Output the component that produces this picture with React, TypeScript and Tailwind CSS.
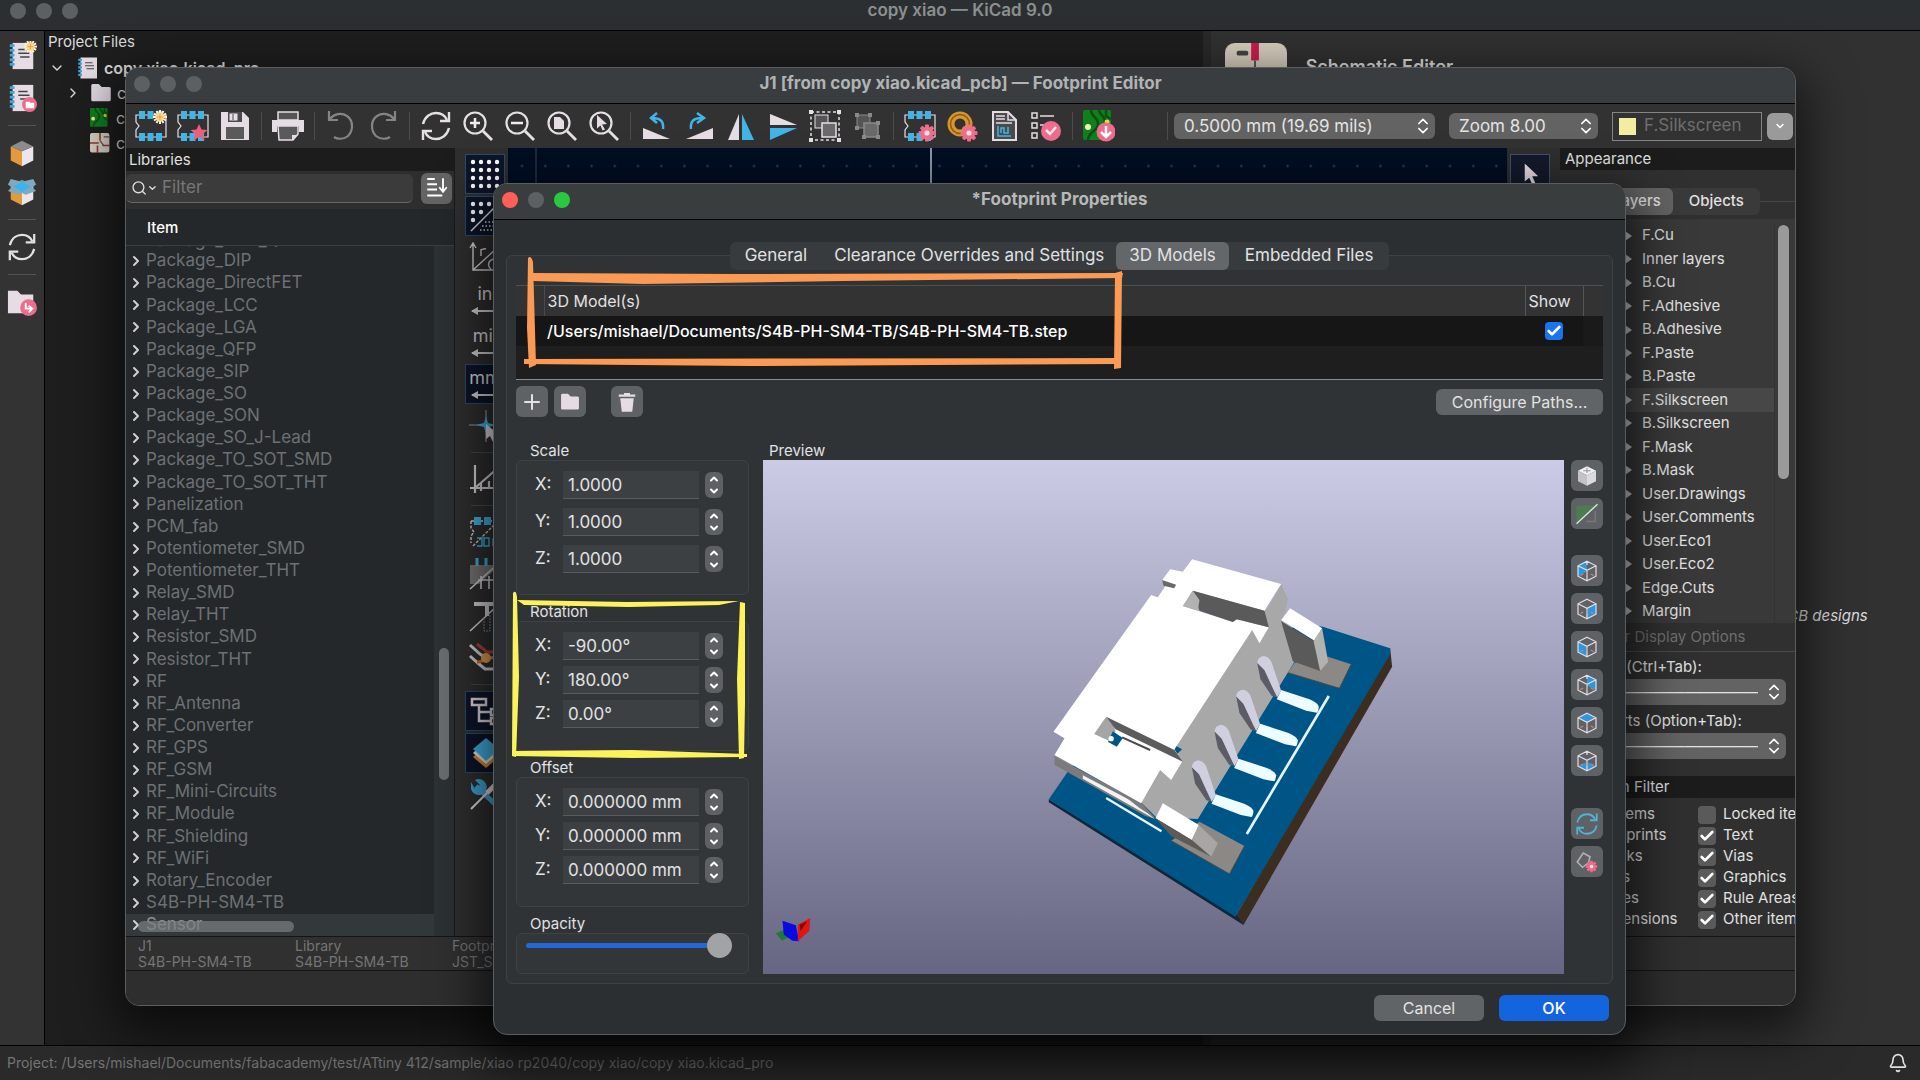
import type { ReactNode } from "react";
import {
  Bell,
  Check,
  ChevronDown,
  ChevronRight,
  ChevronsUpDown,
  ChevronUp,
  Plus,
  Search,
} from "lucide-react";

const libraries = [
  "Package_DIP",
  "Package_DirectFET",
  "Package_LCC",
  "Package_LGA",
  "Package_QFP",
  "Package_SIP",
  "Package_SO",
  "Package_SON",
  "Package_SO_J-Lead",
  "Package_TO_SOT_SMD",
  "Package_TO_SOT_THT",
  "Panelization",
  "PCM_fab",
  "Potentiometer_SMD",
  "Potentiometer_THT",
  "Relay_SMD",
  "Relay_THT",
  "Resistor_SMD",
  "Resistor_THT",
  "RF",
  "RF_Antenna",
  "RF_Converter",
  "RF_GPS",
  "RF_GSM",
  "RF_Mini-Circuits",
  "RF_Module",
  "RF_Shielding",
  "RF_WiFi",
  "Rotary_Encoder",
  "S4B-PH-SM4-TB",
  "Sensor",
];

const layers = [
  "F.Cu",
  "Inner layers",
  "B.Cu",
  "F.Adhesive",
  "B.Adhesive",
  "F.Paste",
  "B.Paste",
  "F.Silkscreen",
  "B.Silkscreen",
  "F.Mask",
  "B.Mask",
  "User.Drawings",
  "User.Comments",
  "User.Eco1",
  "User.Eco2",
  "Edge.Cuts",
  "Margin",
];

const filterLeft = ["All items", "Footprints", "Tracks", "Pads", "Zones", "Dimensions"];
const filterRight = ["Locked items", "Text", "Vias", "Graphics", "Rule Areas", "Other items"];

const groups = [
  { title: "Scale", rows: ["1.0000", "1.0000", "1.0000"], roomy: true },
  { title: "Rotation", rows: ["-90.00°", "180.00°", "0.00°"], roomy: false },
  { title: "Offset", rows: ["0.000000 mm", "0.000000 mm", "0.000000 mm"], roomy: false },
];

const AXES = ["X", "Y", "Z"];

/* ---------- icons ---------- */

function Svg({ children, className = "size-8" }: { children: ReactNode; className?: string }) {
  return (
    <svg viewBox="0 0 32 32" fill="none" className={className} aria-hidden="true">
      {children}
    </svg>
  );
}

function Gear({ x, y, s = 1 }: { x: number; y: number; s?: number }) {
  return (
    <g transform={`translate(${x} ${y}) scale(${s})`}>
      {[0, 45, 90, 135].map((a) => (
        <rect key={a} x="-2" y="-8.5" width="4" height="17" rx="1" fill="#ef6d8c" transform={`rotate(${a})`} />
      ))}
      <circle r="6.3" fill="#ef6d8c" />
      <circle r="2.6" fill="#f6dfe6" />
    </g>
  );
}

function Sun({ x, y }: { x: number; y: number }) {
  return (
    <g transform={`translate(${x} ${y})`}>
      {[0, 30, 60, 90, 120, 150].map((a) => (
        <rect key={a} x="-1" y="-7" width="2" height="14" fill="#fff3cf" transform={`rotate(${a})`} />
      ))}
      <circle r="4.5" fill="#f6d68c" />
      <path d="M-3 0h6M0-3v6" stroke="#e9a23a" />
    </g>
  );
}

function Footprint({ children }: { children?: ReactNode }) {
  return (
    <Svg>
      <path d="M1 5h30v22H1v-7l3-4-3-4z" stroke="#e6e0e6" strokeWidth="1.2" />
      {[5, 13.5, 22].map((x) => (
        <g key={x} fill="#42b5e8">
          <rect x={x - 1} y="1" width="6" height="8" />
          <rect x={x - 1} y="23" width="6" height="8" />
        </g>
      ))}
      {children}
    </Svg>
  );
}

function Arrows({ color = "#e4e0e4", className }: { color?: string; className?: string }) {
  return (
    <Svg className={className}>
      <g stroke={color} strokeWidth="2.4">
        <path d="M3 14C5 6 11 3 16 3c5 0 9 2.500 11 7" />
        <path d="M29 18c-2 8-8 11-13 11-5 0-9-2.500-11-7" />
        <path d="M29 2v9h-9M3 30v-9h9" />
      </g>
    </Svg>
  );
}

function Zoomer({ children }: { children: ReactNode }) {
  return (
    <Svg>
      <circle cx="13" cy="13" r="10.500" stroke="#e4e0e4" strokeWidth="2.200" />
      <path d="M21 21l9 9" stroke="#e4e0e4" strokeWidth="2.800" />
      {children}
    </Svg>
  );
}

function GroupIcon({ color, framed }: { color: string; framed?: boolean }) {
  return (
    <Svg>
      {framed && (
        <>
          <rect x="2" y="2" width="28" height="28" stroke={color} strokeDasharray="3 2.500" strokeWidth="1.500" />
          <path d="M0 0h4v4H0zM28 0h4v4h-4zM0 28h4v4H0zM28 28h4v4h-4z" fill={color} />
        </>
      )}
      <rect x="6" y="5" width="13" height="13" fill="#555" stroke={color} />
      <rect x="13" y="13" width="14" height="14" fill="#6a6a6a" stroke={color} strokeWidth="1.500" />
      {!framed && (
        <path d="M4 3h4v4H4zM17 3h4v4h-4zM4 16h4v4H4zM11 25h4v4h-4zM25 25h4v4h-4zM25 11h4v4h-4z" fill={color} />
      )}
    </Svg>
  );
}

function Board({ children }: { children?: ReactNode }) {
  return (
    <Svg className="size-full">
      <rect width="28" height="30" rx="2" fill="#10801f" />
      <path d="M8 0c0 8 7 6 7 14S6 20 5 30M16 0c0 5 6 5 6 12s6 6 6 8M23 0v6l5 3" stroke="#0a5213" strokeWidth="2.500" />
      <circle cx="5" cy="17" r="3" fill="#f5efae" />
      <circle cx="24" cy="12" r="2.500" fill="#f0d54a" />
      {children}
    </Svg>
  );
}

const toolbar: { label: string; icon: ReactNode }[][] = [
  [
    { label: "New footprint", icon: <Footprint><Sun x={25} y={7} /></Footprint> },
    {
      label: "New footprint from template",
      icon: (
        <Footprint>
          <path d="M22 14l2.500 5.500 6 .5-4.500 4 1.500 6.500-5.500-3.500-5.500 3.500 1.500-6.500-4.500-4 6-.5z" fill="#ef5d7c" />
        </Footprint>
      ),
    },
    {
      label: "Save",
      icon: (
        <Svg>
          <path d="M2 2h22l6 6v22H2z" fill="#e6dde4" />
          <path d="M9 2h14v10H9z" fill="#4a4a4a" />
          <path d="M10 3h9v8h-9zM14 4v6" fill="#e6dde4" stroke="#4a4a4a" />
          <path d="M7 17h18v12H7z" fill="#5a5a5a" />
        </Svg>
      ),
    },
  ],
  [
    {
      label: "Print",
      icon: (
        <Svg>
          <path d="M6 2h20v8H6z" fill="#555" stroke="#e6dde4" strokeWidth="1.500" />
          <path d="M0 10h32v12h-5v-6H5v6H0z" fill="#e6dde4" />
          <path d="M6 16h20v8l-5 6H7z" fill="#5a5a5a" stroke="#e6dde4" strokeWidth="1.500" />
          <path d="M20 30v-5h6z" fill="#e6dde4" />
        </Svg>
      ),
    },
  ],
  [
    {
      label: "Undo",
      icon: (
        <Svg>
          <path d="M4 1v9h9M5 9c4-5 11-7 17-3 7 5 6 15 1 20-5 4-11 3-14 1" stroke="#858585" strokeWidth="2.200" />
        </Svg>
      ),
    },
    {
      label: "Redo",
      icon: (
        <Svg>
          <path d="M28 1v9h-9M27 9C23 4 16 2 10 6 3 11 4 21 9 26c5 4 11 3 14 1" stroke="#858585" strokeWidth="2.200" />
        </Svg>
      ),
    },
  ],
  [
    { label: "Refresh", icon: <Arrows /> },
    { label: "Zoom in", icon: <Zoomer><path d="M13 8v10M8 13h10" stroke="#eee" strokeWidth="2.500" /></Zoomer> },
    { label: "Zoom out", icon: <Zoomer><path d="M7 13h12" stroke="#eee" strokeWidth="2.500" /></Zoomer> },
    { label: "Zoom to fit", icon: <Zoomer><path d="M8 7h6l4 4v8H8z" fill="#e6dde4" /></Zoomer> },
    { label: "Zoom to selection", icon: <Zoomer><path d="M9 5l10 9-5 .5 3 5-2.500 1-2-5-3.500 3z" fill="#e6dde4" /></Zoomer> },
  ],
  [
    {
      label: "Rotate left",
      icon: (
        <Svg>
          <path d="M2 18v11h27z" fill="#e6dde4" />
          <path d="M22 19c1-8-3-11-11-11M16 3l-6 5 6 5" stroke="#42b5e8" strokeWidth="2.500" />
        </Svg>
      ),
    },
    {
      label: "Rotate right",
      icon: (
        <Svg>
          <path d="M30 18v11H3z" fill="#e6dde4" />
          <path d="M8 19C7 11 11 8 19 8M14 3l7 5-7 5" stroke="#42b5e8" strokeWidth="2.500" />
        </Svg>
      ),
    },
    {
      label: "Mirror horizontally",
      icon: (
        <Svg>
          <path d="M14 4v26H3z" fill="#e6dde4" />
          <path d="M17 4v26h12z" fill="#42b5e8" />
        </Svg>
      ),
    },
    {
      label: "Mirror vertically",
      icon: (
        <Svg>
          <path d="M3 4v11h27z" fill="#e6dde4" />
          <path d="M3 30V18h27z" fill="#42b5e8" />
        </Svg>
      ),
    },
    { label: "Group", icon: <GroupIcon color="#e6e0e6" framed /> },
    { label: "Ungroup", icon: <GroupIcon color="#8a8a8a" /> },
  ],
  [
    { label: "Footprint properties", icon: <Footprint><Gear x={23} y={23} /></Footprint> },
    {
      label: "Pad properties",
      icon: (
        <Svg>
          <circle cx="14" cy="14" r="9" stroke="#d8962c" strokeWidth="7" />
          <circle cx="14" cy="14" r="9.500" stroke="#8d5a10" strokeWidth="1.500" />
          <Gear x={23} y={23} />
        </Svg>
      ),
    },
    {
      label: "Datasheet",
      icon: (
        <Svg>
          <path d="M5 2h15l8 8v20H5z" fill="#4b4b4b" stroke="#e6dde4" strokeWidth="2" />
          <path d="M20 2v8h8M8 6h9M8 9h9M8 13h16" stroke="#e6dde4" strokeWidth="1.500" />
          <path d="M10 16v10h13M13 23v-5h3v5h4v-6" stroke="#42b5e8" strokeWidth="1.500" />
        </Svg>
      ),
    },
    {
      label: "Footprint checker",
      icon: (
        <Svg>
          <path d="M2 3h5v5H2zM2 13h5v5H2zM2 23h5v5H2zM10 6h14M10 15h6" stroke="#e6dde4" strokeWidth="1.500" />
          <circle cx="21" cy="21" r="10" fill="#ef6d8c" />
          <path d="M16 20l4 4 6-7" stroke="#fbe8ee" strokeWidth="2.500" />
        </Svg>
      ),
    },
  ],
  [
    {
      label: "Load footprint from board",
      icon: (
        <span className="block size-8">
          <Board>
            <circle cx="23" cy="22" r="9.500" fill="#ef6d8c" />
            <path d="M23 16v11M18 22l5 5 5-5" stroke="#fff" strokeWidth="2.500" />
          </Board>
        </span>
      ),
    },
  ],
];

const CIRCUIT = "M2 5h28M2 5v7l3 4-3 4v7M4 30L30 4";

const sideTools: { label: string; active?: boolean; icon: ReactNode }[][] = [
  [
    {
      label: "Show grid",
      active: true,
      icon: (
        <Svg>
          {[3, 11, 19, 27].map((y) => [3, 11, 19, 27].map((x) => <circle key={`${x}-${y}`} cx={x + 1} cy={y + 1} r="2.200" fill="#fff" />))}
        </Svg>
      ),
    },
    {
      label: "Grid overrides",
      active: true,
      icon: (
        <Svg>
          {[[4, 4], [12, 4], [20, 4], [4, 12], [12, 12], [4, 20]].map(([x, y]) => (
            <circle key={`${x}-${y}`} cx={x} cy={y} r="2.200" fill="#fff" />
          ))}
          <path d="M2 31L31 2" stroke="#ddd" strokeWidth="1.500" />
          <path d="M16 22h14M13 26h17M11 30h19" stroke="#ddd" strokeDasharray="1.500 2" strokeWidth="1.500" />
        </Svg>
      ),
    },
    {
      label: "Polar coordinates",
      icon: (
        <Svg>
          <path d="M4 2v26h26M4 28L28 6M1 6l3-5 3 5M12 14V7c0 2 2-1 5 0M28 18a5 5 0 0 0-6 9" stroke="#d8d4d8" strokeWidth="1.400" />
        </Svg>
      ),
    },
    { label: "Inches", icon: <Unit text="in" /> },
    { label: "Mils", icon: <Unit text="mil" /> },
    { label: "Millimeters", active: true, icon: <Unit text="mm" /> },
    {
      label: "Full-window crosshairs",
      icon: (
        <Svg>
          <path d="M17 0v32M0 15h32" stroke="#9a9a9a" strokeWidth="1.200" />
          <path d="M17 6l2 7 8 2-7 2-3 8-2-8-8-2 8-2z" fill="#42b5e8" />
          <path d="M17 14l12 10-5 1 3 6-3 1-3-6-4 3z" fill="#e6dde4" />
        </Svg>
      ),
    },
  ],
  [
    {
      label: "Line modes",
      icon: (
        <Svg>
          <path d="M6 2v28M1 25h30M6 25L30 4M12 20v8M20 18v7" stroke="#d8d4d8" strokeWidth="2.200" />
        </Svg>
      ),
    },
  ],
  [
    {
      label: "Pad outlines",
      icon: (
        <Svg>
          <path d={CIRCUIT} stroke="#d8d4d8" strokeWidth="1.400" strokeDasharray="3 1.500" />
          <path d="M5 1h7v8H5zM15 1h7v8h-7z" fill="#42b5e8" />
          <path d="M8 22h5v8H8M15 22h5v8h-5zM24 22v8" stroke="#42b5e8" strokeWidth="1.400" />
        </Svg>
      ),
    },
    {
      label: "Graphic outlines",
      icon: (
        <Svg>
          <path d="M1 7h30L10 26H1z" fill="#777" />
          <path d="M8 0v8M17 0v8M26 0v8" stroke="#42b5e8" strokeWidth="3" />
          <path d="M1 31L31 4M9 22h22M12 18v13M20 18v13" stroke="#d8d4d8" strokeWidth="1.600" />
        </Svg>
      ),
    },
    {
      label: "Text outlines",
      icon: (
        <Svg>
          <path d="M5 4h26M18 4v12" stroke="#d8d4d8" strokeWidth="4" />
          <path d="M1 31L28 6" stroke="#d8d4d8" strokeWidth="1.600" />
          <path d="M15 18v13h6V14" stroke="#888" strokeDasharray="2 1" />
        </Svg>
      ),
    },
    {
      label: "Contrast mode",
      icon: (
        <Svg>
          <path d="M8 2l10 8h14" stroke="#b1433f" strokeWidth="3" />
          <path d="M1 3l10 9 6 4M1 14l9 8 6 5h16" stroke="#d8d4d8" strokeWidth="3" />
          <path d="M8 20c6 0 8-5 22-5" stroke="#d0702c" strokeWidth="3" />
          <circle cx="17" cy="16" r="5" fill="#e2a450" />
        </Svg>
      ),
    },
  ],
  [
    {
      label: "Library tree",
      active: true,
      icon: (
        <Svg>
          <path d="M3 4h14v6H3zM10 10v16h12M10 17h12M22 14h8v6h-8zM22 23h8v6h-8z" stroke="#e6dde4" strokeWidth="2.500" />
        </Svg>
      ),
    },
    {
      label: "Layers manager",
      active: true,
      icon: (
        <Svg>
          <path d="M17 8l13 12-13 11L4 20z" fill="#e08a3a" />
          <path d="M17 4l13 12-13 11L4 16z" fill="#f1e7dc" />
          <path d="M17 1l13 11-13 12L4 12z" fill="#42b5e8" />
        </Svg>
      ),
    },
    {
      label: "Properties",
      icon: (
        <Svg>
          <path d="M7 7l20 19" stroke="#42a5d8" strokeWidth="5" />
          <path d="M2 3l4 7 5-4-5-5a8 8 0 1 1-4 9z" fill="#42a5d8" />
          <path d="M2 30L20 12" stroke="#e6dde4" strokeWidth="2" />
          <path d="M18 14L28 4" stroke="#e6dde4" strokeWidth="5" />
        </Svg>
      ),
    },
  ],
];

function Unit({ text }: { text: string }) {
  return (
    <span className="flex h-8 w-8 flex-col items-center justify-between text-lg leading-5 text-[#d8d4d8]">
      {text}
      <svg viewBox="0 0 32 10" fill="none" className="h-[10px] w-8" aria-hidden="true">
        <path d="M3 5h27" stroke="#d8d4d8" strokeWidth="2" />
        <path d="M9 1v8L2 5z" fill="#d8d4d8" />
      </svg>
    </span>
  );
}

const EDGES = "M16 3l12 6v14l-12 6-12-6V9zM4 9l12 6 12-6M16 15v14";

function Cube({ face, back }: { face: string; back?: boolean }) {
  return (
    <Svg className="size-6">
      <path d={face} fill="#2c96e0" />
      <path
        d={back ? "M16 3l12 6v14l-12 6-12-6V9zM4 9l12 6 12-6M16 15v14M16 3v5" : EDGES}
        stroke="#e6dde4"
        strokeWidth="1.600"
      />
      <path d="M16 17v5M11 20l-4 2M21 20l4 2" stroke="#c98a72" strokeWidth="1.400" />
    </Svg>
  );
}

const viewButtons: { label: string; icon: ReactNode }[][] = [
  [
    {
      label: "Perspective",
      icon: (
        <Svg className="size-6">
          <path d="M16 3l12 6-12 6L4 9z" fill="#f2f0f2" />
          <path d="M4 9l12 6v14L4 23z" fill="#c4c2c4" />
          <path d="M28 9l-12 6v14l12-6z" fill="#dcdadc" />
          <path d="M16 5v7M11 9h10" stroke="#999" strokeWidth="1.500" />
        </Svg>
      ),
    },
    {
      label: "Show board body",
      icon: (
        <Svg className="size-6">
          <path d="M2 5h26L2 28z" fill="#4d7c51" />
          <path d="M15 26h12V12" stroke="#777" strokeWidth="2" />
          <path d="M2 29L30 3" stroke="#dfe5df" strokeWidth="1.800" />
        </Svg>
      ),
    },
  ],
  [
    { label: "Left view", icon: <Cube face="M4 9l12-6v14L4 23z" back /> },
    { label: "Right view", icon: <Cube face="M28 9l-12 6v14l12-6z" /> },
    { label: "Front view", icon: <Cube face="M4 9l12 6v14L4 23z" /> },
    { label: "Back view", icon: <Cube face="M16 3l12 6v14l-12-6z" back /> },
    { label: "Top view", icon: <Cube face="M16 3l12 6-12 6L4 9z" /> },
    { label: "Bottom view", icon: <Cube face="M16 17l12 6-12 6-12-6z" back /> },
  ],
  [
    { label: "Reload model", icon: <Arrows color="#4fb3d8" className="size-6" /> },
    {
      label: "Viewer options",
      icon: (
        <Svg className="size-6">
          <path d="M3 16l8-12 9 5-2 8-8 6z" stroke="#b5b1b5" strokeWidth="2" />
          <Gear x={22} y={22} s={0.9} />
        </Svg>
      ),
    },
  ],
];

/* ---------- small controls ---------- */

function Lights({ live }: { live?: boolean }) {
  return (
    <div className="flex gap-[10px]">
      <span className={`size-4 rounded-full ${live ? "bg-[#ff5f57]" : "bg-[#5c6062]"}`} />
      <span className="size-4 rounded-full bg-[#5c6062]" />
      <span className={`size-4 rounded-full ${live ? "bg-[#28c840]" : "bg-[#5c6062]"}`} />
    </div>
  );
}

function CheckBox({ id, label, checked, blue }: { id: string; label?: string; checked?: boolean; blue?: boolean }) {
  return (
    <span className="relative inline-block size-[18px] shrink-0">
      <input
        id={id}
        type="checkbox"
        aria-label={label}
        defaultChecked={checked}
        className={`peer block size-[18px] appearance-none rounded ${blue ? "bg-[#1a74ea]" : "bg-[#5a5a5a]"}`}
      />
      <Check className="pointer-events-none absolute inset-0 hidden size-[18px] p-px text-white peer-checked:block" strokeWidth={4} />
    </span>
  );
}

function Spinner({ name }: { name: string }) {
  return (
    <div className="flex h-[26px] w-[18px] flex-col items-center justify-between rounded-md bg-[#5e6163] py-px text-white">
      <button aria-label={`Increase ${name}`}>
        <ChevronUp className="size-3" strokeWidth={4} />
      </button>
      <button aria-label={`Decrease ${name}`}>
        <ChevronDown className="size-3" strokeWidth={4} />
      </button>
    </div>
  );
}

function Select({ label, value, className }: { label: string; value: string; className: string }) {
  return (
    <div className={`relative ${className}`}>
      <select
        aria-label={label}
        className="h-[26px] w-full appearance-none overflow-hidden rounded-md bg-[#636363] pr-7 pl-[10px] text-[17px] leading-6 text-[#e4e4e4]"
      >
        <option>{value}</option>
      </select>
      <ChevronsUpDown className="pointer-events-none absolute top-[3px] right-[2px] size-5 text-white" />
    </div>
  );
}

/* ---------- project manager window ---------- */

function NotebookIcon({ children, className = "size-[30px]" }: { children?: ReactNode; className?: string }) {
  return (
    <Svg className={className}>
      <path d="M6 2h22v28H6z" fill="#e6dde4" />
      <path d="M3 5h5M3 10h5M3 15h5M3 20h5M3 25h5" stroke="#42a5d8" strokeWidth="3" />
      <path d="M12 9h10M12 13h12M14 17h10" stroke="#444" strokeWidth="1.500" />
      {children}
    </Svg>
  );
}

function BoxIcon({ open }: { open?: boolean }) {
  return (
    <Svg className="size-[30px]">
      <path d="M4 9l12 5v16L4 24z" fill="#e29a3a" />
      <path d="M28 9l-12 5v16l12-6z" fill="#ece6ec" />
      <path d="M4 9l12-6 12 6-12 5z" fill="#8c8c8c" />
      {open && (
        <>
          <path d="M4 2l12 3 12-3 3 6-4 3 4 4-11 4-4-2-4 2-11-4 4-4-4-3z" fill="#7fa9bd" />
          <path d="M16 5l9 5-9 6-9-6z" fill="#3ab4ee" />
        </>
      )}
    </Svg>
  );
}

function FolderIcon({ className = "size-5" }: { className?: string }) {
  return (
    <Svg className={className}>
      <path d="M3 6a2 2 0 0 1 2-2h8l4 4h10a2 2 0 0 1 2 2v15a2 2 0 0 1-2 2H5a2 2 0 0 1-2-2z" fill="#e4dbe3" />
    </Svg>
  );
}

function ProjectWindow() {
  return (
    <section className="flex h-full flex-col">
      <header className="relative flex h-[31px] shrink-0 items-center border-b border-black bg-[#2c2f31] pb-2 pl-[10px]">
        <Lights />
        <h1 className="absolute inset-x-0 text-center text-[17px] font-semibold text-[#8c8f90]">copy xiao — KiCad 9.0</h1>
      </header>
      <div className="flex min-h-0 flex-1">
        <nav className="flex w-[45px] shrink-0 flex-col items-center border-r border-black bg-[#333] pt-[10px]">
          <button aria-label="New project">
            <NotebookIcon><Sun x={25} y={6} /></NotebookIcon>
          </button>
          <button aria-label="Open project" className="mt-3">
            <NotebookIcon>
              <circle cx="24" cy="23" r="8" fill="#ef6d8c" />
              <path d="M20 20h4l1 1h4v6h-9z" fill="#fff" />
            </NotebookIcon>
          </button>
          <hr className="mt-3 w-7 border-[#555]" />
          <button aria-label="Archive project" className="mt-3">
            <BoxIcon />
          </button>
          <button aria-label="Unarchive project" className="mt-[9px]">
            <BoxIcon open />
          </button>
          <hr className="mt-3 w-7 border-[#555]" />
          <button aria-label="Refresh" className="mt-3">
            <Arrows className="size-[30px]" />
          </button>
          <hr className="mt-3 w-7 border-[#555]" />
          <button aria-label="Browse project files" className="mt-3">
            <Svg className="size-[30px]">
              <path d="M1 4h10l4 4h13v20H1z" fill="#e6dde4" />
              <circle cx="23" cy="22" r="9" fill="#ef6d8c" />
              <path d="M20 17v6h6M23 20l4 3-4 4" stroke="#fff" strokeWidth="2" />
            </Svg>
          </button>
        </nav>
        <div className="flex-[1157] bg-[#1e1e1e] text-[#dcdcdc]">
          <h2 className="h-[24px] pl-[3px] text-[15px] leading-[21px]">Project Files</h2>
          <ul className="text-base font-semibold">
            <li className="flex h-[25px] items-center pl-1">
              <ChevronDown className="mr-[11px] size-4" />
              <NotebookIcon className="size-6" />
              <span className="pl-1">copy xiao.kicad_pro</span>
            </li>
            <li className="flex h-[25px] items-center gap-1 pl-5 font-normal">
              <ChevronRight className="mr-1 size-4" />
              <FolderIcon className="size-6" />
              copy xiao-backups
            </li>
            <li className="flex h-[25px] items-center gap-[6px] pl-[45px] font-normal">
              <span className="block size-5"><Board /></span>
              copy xiao.kicad_pcb
            </li>
            <li className="flex h-[25px] items-center gap-[6px] pl-[45px] font-normal">
              <Svg className="size-5">
                <rect width="31" height="31" rx="3" fill="#ddd2c4" />
                <path d="M16 0v12M0 16h14M20 20h12M12 32V20" stroke="#8f3a3a" strokeWidth="2.500" />
                <path d="M16 12l6 8M22 6h10" stroke="#555" strokeWidth="2" />
              </Svg>
              copy xiao.kicad_sch
            </li>
          </ul>
        </div>
        <div className="flex-[709] border-l-8 border-[#292929] bg-[#313131] text-[#dcdcdc]">
          <div className="flex gap-[19px] pt-3 pl-[14px]">
            <Svg className="size-[62px]">
              <rect width="32" height="32" rx="5" fill="#d6cdbd" />
              <path d="M15.500 0v9" stroke="#c81e4a" strokeWidth="4" />
              <path d="M15.500 9v23" stroke="#555" />
              <rect x="6" y="4" width="6" height="2.500" rx="1" fill="#444" />
            </Svg>
            <h3 className="pt-[10px] text-[18px] font-semibold">Schematic Editor</h3>
          </div>
          <p className="mt-[500px] pl-[72px] text-[15px] whitespace-nowrap italic">
            Edit drawing sheet borders and title blocks for use in schematics and PCB designs
          </p>
        </div>
      </div>
      <footer className="flex h-[35px] shrink-0 items-center justify-between border-t border-black bg-[#2a2a2a] pr-3 pl-[7px] text-sm text-[#757575]">
        <span>Project: /Users/mishael/Documents/fabacademy/test/ATtiny 412/sample/xiao rp2040/copy xiao/copy xiao.kicad_pro</span>
        <Bell className="size-5 text-[#e0e0e0]" />
      </footer>
    </section>
  );
}

/* ---------- footprint editor window ---------- */

function LibraryTree() {
  return (
    <aside className="flex w-[329px] shrink-0 flex-col border-r border-[#1a1a1a] bg-[#2e2e2e]">
      <h3 className="h-[23px] bg-[#1c1c1c] pl-[3px] text-[15px] leading-[23px] text-[#e0e0e0]">Libraries</h3>
      <div className="flex h-[34px] items-center gap-2 pr-[2px]">
        <label className="flex h-[29px] flex-1 items-center rounded-md border-b border-[#666] bg-[#3b3b3b] pl-[5px] text-[#ddd]">
          <Search className="size-[18px]" />
          <ChevronDown className="size-3" strokeWidth={3} />
          <input aria-label="Filter" placeholder="Filter" className="w-full min-w-0 bg-transparent pl-1 text-[17px] outline-none placeholder:text-[#777]" />
        </label>
        <button aria-label="Sort" className="flex size-[31px] items-center justify-center rounded-md bg-[#646464]">
          <Svg className="size-6">
            <path d="M3 4h10M3 11h13M3 18h13M3 26h20" stroke="#fff" strokeWidth="2.500" />
            <path d="M24 3v18M19 15l5 6 5-6" stroke="#fff" strokeWidth="2.500" />
          </Svg>
        </button>
      </div>
      <div className="mt-1 flex min-h-0 flex-1 flex-col bg-[#24282b]">
        <div className="h-[37px] border-b border-[#3a3f42] pl-[21px] text-[15px] leading-[37px] font-medium text-white">Item</div>
        <div className="relative flex min-h-0 flex-1">
          <ul className="flex min-w-0 flex-1 flex-col text-[17px] text-[#6d7173]">
            <li className="relative h-[4px] shrink-0 overflow-hidden">
              <span className="absolute bottom-0 left-5 leading-[19px]">Package_DFN_QFN</span>
            </li>
            {libraries.map((name) => (
              <li key={name} className="flex min-h-0 flex-1 items-center last:bg-[#33383b] last:text-[#8c9092]">
                <ChevronRight className="mx-[2px] size-4 text-[#d0d0d0]" strokeWidth={3} />
                {name}
              </li>
            ))}
          </ul>
          <div className="w-[20px] bg-[#2c3134] pl-[5px]">
            <div className="mt-[402px] h-[132px] w-[10px] rounded-full bg-[#6a6e70]" />
          </div>
          <div className="absolute bottom-1 left-3 h-[11px] w-[156px] rounded-full bg-[#7c8082]/70" />
        </div>
      </div>
    </aside>
  );
}

function Appearance() {
  return (
    <aside className="flex w-[235px] shrink-0 flex-col overflow-hidden bg-[#303030] text-[15px] whitespace-nowrap text-[#e0e0e0]">
      <h3 className="h-[22px] bg-[#1c1c1c] pl-[5px] leading-[22px]">Appearance</h3>
      <div className="relative mt-[18px] flex h-[27px] pl-[41px] font-medium">
        <div className="flex rounded-md bg-[#3a3a3a]">
          <button className="rounded-md bg-[#636363] px-3">Layers</button>
          <button className="px-4">Objects</button>
        </div>
        <hr className="mt-[13px] flex-1 border-[#444]" />
      </div>
      <div className="mt-1 flex h-[404px] bg-[#393939] pt-[5px]">
        <ul className="flex flex-1 flex-col">
          {layers.map((name) => (
            <li key={name} className={`flex min-h-0 flex-1 items-center pl-[65px] ${name === "F.Silkscreen" ? "bg-[#474747]" : ""}`}>
              <svg viewBox="0 0 8 12" className="mr-[9px] h-3 w-2 fill-[#c4c4c4]" aria-hidden="true">
                <path d="M0 1l7 5-7 5z" />
              </svg>
              {name}
            </li>
          ))}
        </ul>
        <div className="w-[21px] border-l border-[#333] pt-px pl-[3px]">
          <div className="h-[254px] w-[11px] rounded-full bg-[#9a9a9a]" />
        </div>
      </div>
      <button className="h-[29px] border-b border-[#4a4a4a] pl-[31px] text-left text-[#6e6e6e]">Layer Display Options</button>
      <p className="h-[27px] pl-[9px] leading-[30px]">Presets (Ctrl+Tab):</p>
      <Select label="Presets" value="────────────────" className="mr-[9px] ml-[6px]" />
      <p className="h-7 pl-[9px] leading-8">Viewports (Option+Tab):</p>
      <Select label="Viewports" value="────────────────" className="mr-[9px] ml-[6px]" />
      <h3 className="mt-[17px] h-[22px] bg-[#1c1c1c] pl-1 leading-[22px]">Selection Filter</h3>
      <div className="grid grid-cols-[128px_auto] pt-[6px] pl-[10px]">
        {filterLeft.map((left, i) => (
          <div key={left} className="contents">
            <label className="flex h-[21px] items-center gap-[7px]">
              <CheckBox id={`left-${i}`} checked />
              {left}
            </label>
            <label className="flex h-[21px] items-center gap-[7px]">
              <CheckBox id={`right-${i}`} checked={i > 0} />
              {filterRight[i]}
            </label>
          </div>
        ))}
      </div>
    </aside>
  );
}

function EditorWindow() {
  return (
    <section className="absolute top-[67px] right-[124px] bottom-[74px] left-[125px] flex flex-col overflow-hidden rounded-[14px] border border-[#5b5e60] bg-[#2f2f2f] shadow-[0_18px_50px_10px_rgba(0,0,0,0.6)]">
      <header className="relative flex h-9 shrink-0 items-center border-b border-black bg-[#3a3d3f] pb-[3px] pl-2">
        <Lights />
        <h2 className="absolute inset-x-0 text-center text-[17px] font-bold text-[#b0b3b4]">
          J1 [from copy xiao.kicad_pcb] — Footprint Editor
        </h2>
      </header>
      <div className="flex h-[44px] shrink-0 items-center bg-[#323232] pr-[2px] pl-[9px]">
        <div className="flex flex-1 items-center gap-[10px]">
          {toolbar.map((group, i) => (
            <div key={i} className="flex items-center gap-[10px]">
              {group.map((tool) => (
                <button key={tool.label} aria-label={tool.label}>
                  {tool.icon}
                </button>
              ))}
              {i < toolbar.length - 1 && <span className="h-7 w-px bg-[#4c4c4c]" />}
            </div>
          ))}
        </div>
        <span className="mr-[6px] h-7 w-px bg-[#4c4c4c]" />
        <Select label="Grid" value="0.5000 mm (19.69 mils)" className="mr-[14px] w-[261px]" />
        <Select label="Zoom" value="Zoom 8.00" className="mr-[14px] w-[149px]" />
        <div className="mr-[5px] flex h-[29px] w-[150px] items-center gap-2 border border-[#858585] pl-[6px] text-[17px] text-[#6e6e6e]">
          <span className="size-[17px] bg-[#f2eda1]" />
          F.Silkscreen
        </div>
        <button aria-label="Choose layer" className="flex h-[27px] w-[26px] items-center justify-center rounded-md bg-[#9a9a9a]">
          <ChevronDown className="size-3 text-white" strokeWidth={3} />
        </button>
      </div>
      <div className="flex min-h-0 flex-1">
        <LibraryTree />
        <div className="flex w-[53px] shrink-0 flex-col gap-[2px] pt-[6px] pl-[10px]">
          {sideTools.map((group, i) => (
            <div key={i} className="flex flex-col gap-[2px]">
              {i > 0 && <hr className="my-1 ml-[6px] w-7 border-[#4a4a4a]" />}
              {group.map((tool) => (
                <button
                  key={tool.label}
                  aria-label={tool.label}
                  className={`flex size-10 items-center justify-center border ${tool.active ? "border-[#2c4a6a] bg-[#0d1529]" : "border-transparent"}`}
                >
                  {tool.icon}
                </button>
              ))}
            </div>
          ))}
        </div>
        <svg className="h-full min-w-0 flex-1 bg-[#000e23]" aria-hidden="true">
          <defs>
            <pattern id="dots" width="23.200" height="23.200" x="2" y="6" patternUnits="userSpaceOnUse">
              <rect x="11" y="11" width="2" height="2" fill="#3c475c" />
            </pattern>
          </defs>
          <rect width="100%" height="100%" fill="url(#dots)" />
          <path d="M28 0v800" stroke="#38445c" />
          <path d="M423 0v800" stroke="#8e97a8" strokeWidth="2" />
        </svg>
        <div className="w-[53px] shrink-0 pt-[6px] pl-[3px]">
          <button aria-label="Select" className="flex size-10 items-center justify-center border border-[#3e5270] bg-[#131a2c]">
            <Svg className="size-6">
              <path d="M9 2v24l6-5 4 9 4-2-4-9h8z" fill="#e6dde4" />
            </Svg>
          </button>
        </div>
        <Appearance />
      </div>
      <div className="flex h-[35px] shrink-0 border-y border-[#151515] bg-[#303030] pt-px pl-3 text-sm leading-4 text-[#757575]">
        <p className="w-[157px]">J1<br />S4B-PH-SM4-TB</p>
        <p className="w-[157px]">Library<br />S4B-PH-SM4-TB</p>
        <p>Footprint Name<br />JST_S4B-PH-SM4-TB</p>
      </div>
      <div className="h-[34px] shrink-0 bg-[#2e2e2e]" />
    </section>
  );
}

/* ---------- footprint properties dialog ---------- */

function ModelPreview() {
  return (
    <svg viewBox="0 0 802 514" preserveAspectRatio="xMidYMid slice" className="min-h-0 w-full flex-1" role="img" aria-label="Preview">
      <defs>
        <linearGradient id="sky" x1="0" y1="0" x2="0" y2="1">
          <stop offset="0" stopColor="#cbcbe5" />
          <stop offset="1" stopColor="#666682" />
        </linearGradient>
      </defs>
      <rect width="802" height="514" fill="url(#sky)" />
      <g transform="translate(237 60) scale(0.3333)">
        {/* board */}
        <path d="M1172 385l6 55-446 775-24-25z" fill="#3b2e20" />
        <path d="M148 838l562 345 22 32-584-368z" fill="#10263a" />
        <path d="M148 838l67-98 685-430 70 10 202 65v18L708 1190z" fill="#005587" />
        <path d="M988 528L742 942" stroke="#e6f6ff" strokeWidth="8" />
        <path d="M985 410l70 23-35 72-155-47 20-30z" fill="#8c8885" />
        <path d="M600 905l135 73-45 84-175-100z" fill="#8c8885" />
        <path d="M1055 433l-35 72-155-47M735 978l-45 84-175-100" stroke="#4c4b3e" strokeWidth="3" fill="none" />
        <path d="M258 764l165 88 40 44-213-120z" fill="#f4f4f4" />
        <path d="M320 834l166 100" stroke="#e8f4fb" strokeWidth="7" />
        {/* side walls */}
        <path d="M845 192l20 45-15 70 35 118-290 472-125-5-50-50 60-92 68-62-22-12 233-350 46-61z" fill="#a8a8a8" />
        <path d="M165 708l262 142 40 46-30-8-110-62-162-92z" fill="#7b7b7b" />
        <path d="M250 766l168 88 46 42-214-120z" fill="#f2f2f2" />
        <path d="M425 850l45 46-50-32-50-40z" fill="#7b7b7b" />
        {/* top shell */}
        <path
          d="M578 118l267 74-50 80-215-60-30 46 150 48 12-8 96 24-28 48-22-40-233 358 23 37-33 55-33-30-57 100-260-145 30-50-33-20 293-410 20 7 25-37-12-15 24-32 38 7z"
          fill="#fff"
        />
        <path d="M580 212l215 60 13 50-96-24-12 8-100-34z" fill="#5a5a5a" />
        <path d="M580 212l20 28-5 32-45-14z" fill="#b2b2b2" />
        <path d="M488 180l42 14-6 11-32-8z" fill="#6a6a6a" />
        <path d="M320 590l24 30 4 14-20 28-44-20z" fill="#a5a5a5" />
        <path d="M320 590l205 100 25 35-202-97z" fill="#5c5c5c" />
        <path d="M340 634l30 20-18 26-26-14z" fill="#005587" />
        <circle cx="335" cy="656" r="8" fill="#fff" />
        <path d="M368 652l84 38" stroke="#4a4a4a" strokeWidth="6" />
        {/* solder tabs */}
        <path d="M872 265l96 60-23 37-100-62z" fill="#fff" />
        <path d="M845 304l97 58 22 92-84-30z" fill="#5a5a5a" />
        <path d="M942 362l26-37 18 100-24 28z" fill="#b4b2b0" />
        <path d="M490 850l108 65-21 45-109-65z" fill="#fff" />
        <path d="M598 915l57 55-20 40-58-50z" fill="#a8a6a4" />
        <path d="M468 895l109 65 58 50-120-62z" fill="#5e5a56" />
        {/* pins */}
        {[[0, 0], [-63, 101], [-128, 206], [-196, 313]].map(([x, y]) => (
          <g key={x} transform={`translate(${x} ${y})`}>
            <path d="M845 510l85 28q24 10 28 22-1 14-6 18l-32-6-88-34z" fill="#eefcff" />
            <path d="M773 428l22 22 38 82-16-4-34-50z" fill="#5c5c66" />
            <path d="M773 428q2-18 20-20 15 2 23 18l29 86-12 20-38-82z" fill="#cfcfe0" />
          </g>
        ))}
      </g>
      <g transform="translate(-24 420) scale(0.3333)">
        <path d="M112 160l24-10 14 22-20 10z" fill="#1f7a35" />
        <path d="M132 122l40 14 10 48-20-2-26-18z" fill="#0a0ae0" />
        <path d="M178 134l37-20-2 38-35 32z" fill="#e01616" />
        <path d="M184 134l22-10-20 30z" fill="#7a0c0c" />
      </g>
    </svg>
  );
}

function Placement() {
  return (
    <div className="flex w-[233px] shrink-0 flex-col gap-2 text-[15px]">
      {groups.map((group) => (
        <fieldset key={group.title}>
          <legend className="h-[18px] pl-[14px] leading-[18px]">{group.title}</legend>
          <div
            className={`flex flex-col rounded-md border border-[#3d4245] bg-[#323639] pt-[10px] pl-[18px] ${group.roomy ? "h-[135px] gap-[9px]" : "h-[130px] gap-[6px]"}`}
          >
            {group.rows.map((value, i) => {
              const id = `${group.title}-${AXES[i]}`;
              return (
                <div key={id} className="flex items-center text-[17px]">
                  <label htmlFor={id} className="w-7">
                    {AXES[i]}:
                  </label>
                  <input
                    id={id}
                    defaultValue={value}
                    className="mr-[6px] h-7 w-[136px] border-b border-[#585c5f] bg-[#3c4043] pl-[5px] outline-none"
                  />
                  <Spinner name={id} />
                </div>
              );
            })}
          </div>
        </fieldset>
      ))}
      <div className="flex flex-1 flex-col">
        <label htmlFor="opacity" className="h-[18px] pl-[14px] leading-[18px]">
          Opacity
        </label>
        <div className="flex-1 rounded-md border border-[#3d4245] bg-[#323639] pl-[9px]">
          <input
            id="opacity"
            type="range"
            defaultValue={100}
            className="block h-[22px] w-[206px] appearance-none bg-transparent [&::-webkit-slider-runnable-track]:h-[5px] [&::-webkit-slider-runnable-track]:rounded-full [&::-webkit-slider-runnable-track]:bg-[#2467d6] [&::-webkit-slider-thumb]:-mt-[10px] [&::-webkit-slider-thumb]:size-[25px] [&::-webkit-slider-thumb]:appearance-none [&::-webkit-slider-thumb]:rounded-full [&::-webkit-slider-thumb]:bg-[#a2a3a4]"
          />
        </div>
      </div>
    </div>
  );
}

/* hand-drawn marker boxes over the dialog */
function Highlights() {
  return (
    <svg className="pointer-events-none absolute -top-px -left-px h-[600px] w-[660px]" aria-hidden="true">
      <g fill="#fb9a54">
        <path d="M35 75q3-3 5 4l3 103-7 3-2-40z" />
        <path d="M40 90l200 1 390-1-1 5-279 3-200 3-110-3z" />
        <path d="M622 90l7-2-1 97-7 1z" />
        <path d="M31 176l595-1v6l-370 2-225-2z" />
      </g>
      <g fill="#fbf25c">
        <path d="M20 410q3-4 4 4l2 80-3 80-4-1z" />
        <path d="M24 417l110 2 112-1-20 4-90 2-105-2z" />
        <path d="M247 419l5 1 0 100-1 55-5 1-2-80z" />
        <path d="M19 568l120-1 115 4v3l-115 1-120-2z" />
      </g>
    </svg>
  );
}

const ICON_BUTTON = "flex h-[31px] w-8 items-center justify-center rounded-md bg-[#5f6264]";

function PropertiesDialog() {
  return (
    <section
      role="dialog"
      aria-label="Footprint Properties"
      className="absolute top-[183px] right-[294px] bottom-[45px] left-[493px] flex flex-col rounded-[14px] border border-[#5b5e60] bg-[#2b2f31] text-[#e2e2e2] shadow-[0_20px_50px_12px_rgba(0,0,0,0.65)]"
    >
      <header className="relative flex h-[36px] shrink-0 items-center rounded-t-[13px] border-b border-black bg-[#3a3d3d] pb-1 pl-2">
        <Lights live />
        <h2 className="absolute inset-x-0 text-center text-[17px] font-bold text-[#b6b8b9]">*Footprint Properties</h2>
      </header>
      <div className="flex min-h-0 flex-1 flex-col px-3 pt-[22px]">
        <div role="tablist" className="relative z-10 -mb-[15px] flex h-7 self-center rounded-md bg-[#373b3e] text-[17px]">
          <button role="tab" className="px-[15px]">General</button>
          <button role="tab" className="px-3">Clearance Overrides and Settings</button>
          <button role="tab" className="rounded-md bg-[#63676a] px-[13px]">3D Models</button>
          <button role="tab" className="px-4">Embedded Files</button>
        </div>
        <div className="flex min-h-0 flex-1 flex-col rounded-md border border-[#3d4245] bg-[#2f3335] px-[9px] pt-[29px] pb-[9px]">
          <div className="h-[95px] shrink-0 border-t border-b border-t-[#4c5053] border-b-[#8a8c8d] bg-[#1e1e1e]">
            <table className="w-full table-fixed border-collapse text-base">
              <thead>
                <tr className="h-[30px] bg-[#333] text-left">
                  <th className="w-7 border-r border-[#4a4a4a]" />
                  <th className="pl-[3px] font-normal">3D Model(s)</th>
                  <th className="w-[58px] border-x border-[#555] pl-[3px] font-normal">Show</th>
                  <th className="w-5" />
                </tr>
              </thead>
              <tbody>
                <tr className="h-[30px] bg-[#161616]">
                  <td />
                  <td className="pl-[3px] font-medium text-white">/Users/mishael/Documents/S4B-PH-SM4-TB/S4B-PH-SM4-TB.step</td>
                  <td className="text-center align-middle">
                    <span className="flex justify-center">
                      <CheckBox id="show" label="Show" checked blue />
                    </span>
                  </td>
                  <td className="bg-[#1a1a1a]" />
                </tr>
              </tbody>
            </table>
          </div>
          <div className="mt-[6px] flex shrink-0 items-center">
            <button aria-label="Add model" className={`${ICON_BUTTON} mr-[6px]`}>
              <Plus className="size-6" />
            </button>
            <button aria-label="Browse for model" className={`${ICON_BUTTON} mr-[25px]`}>
              <FolderIcon className="size-[22px]" />
            </button>
            <button aria-label="Remove model" className={ICON_BUTTON}>
              <Svg className="size-6">
                <path d="M5 6h22v3H5zM12 4h8v2h-8zM7 11h18l-2 18H9z" fill="#e6dde4" />
              </Svg>
            </button>
            <button className="ml-auto h-[26px] w-[167px] rounded-md bg-[#606466] text-base">Configure Paths...</button>
          </div>
          <div className="mt-[25px] flex min-h-0 flex-1">
            <Placement />
            <div className="ml-[14px] flex min-w-0 flex-1 flex-col text-[15px]">
              <h3 className="h-[18px] pl-[6px] leading-[18px]">Preview</h3>
              <ModelPreview />
            </div>
            <div className="ml-[7px] flex flex-col pt-[18px]">
              {viewButtons.map((group, i) => (
                <div key={i} className="mb-[26px] flex flex-col gap-[7px] nth-2:mb-8">
                  {group.map((view) => (
                    <button key={view.label} aria-label={view.label} className={ICON_BUTTON}>
                      {view.icon}
                    </button>
                  ))}
                </div>
              ))}
            </div>
          </div>
        </div>
      </div>
      <footer className="flex h-[50px] shrink-0 items-start justify-end gap-[15px] pt-[11px] pr-4 text-base">
        <button className="h-[26px] w-[110px] rounded-md bg-[#606466]">Cancel</button>
        <button className="h-[26px] w-[110px] rounded-md bg-[#1464e0] font-medium text-white">OK</button>
      </footer>
      <Highlights />
    </section>
  );
}

export default function App() {
  return (
    <main className="relative h-screen min-h-[1080px] w-full overflow-hidden bg-[#1e1e1e] font-[Inter,'Liberation_Sans',sans-serif]">
      <ProjectWindow />
      <EditorWindow />
      <PropertiesDialog />
    </main>
  );
}
